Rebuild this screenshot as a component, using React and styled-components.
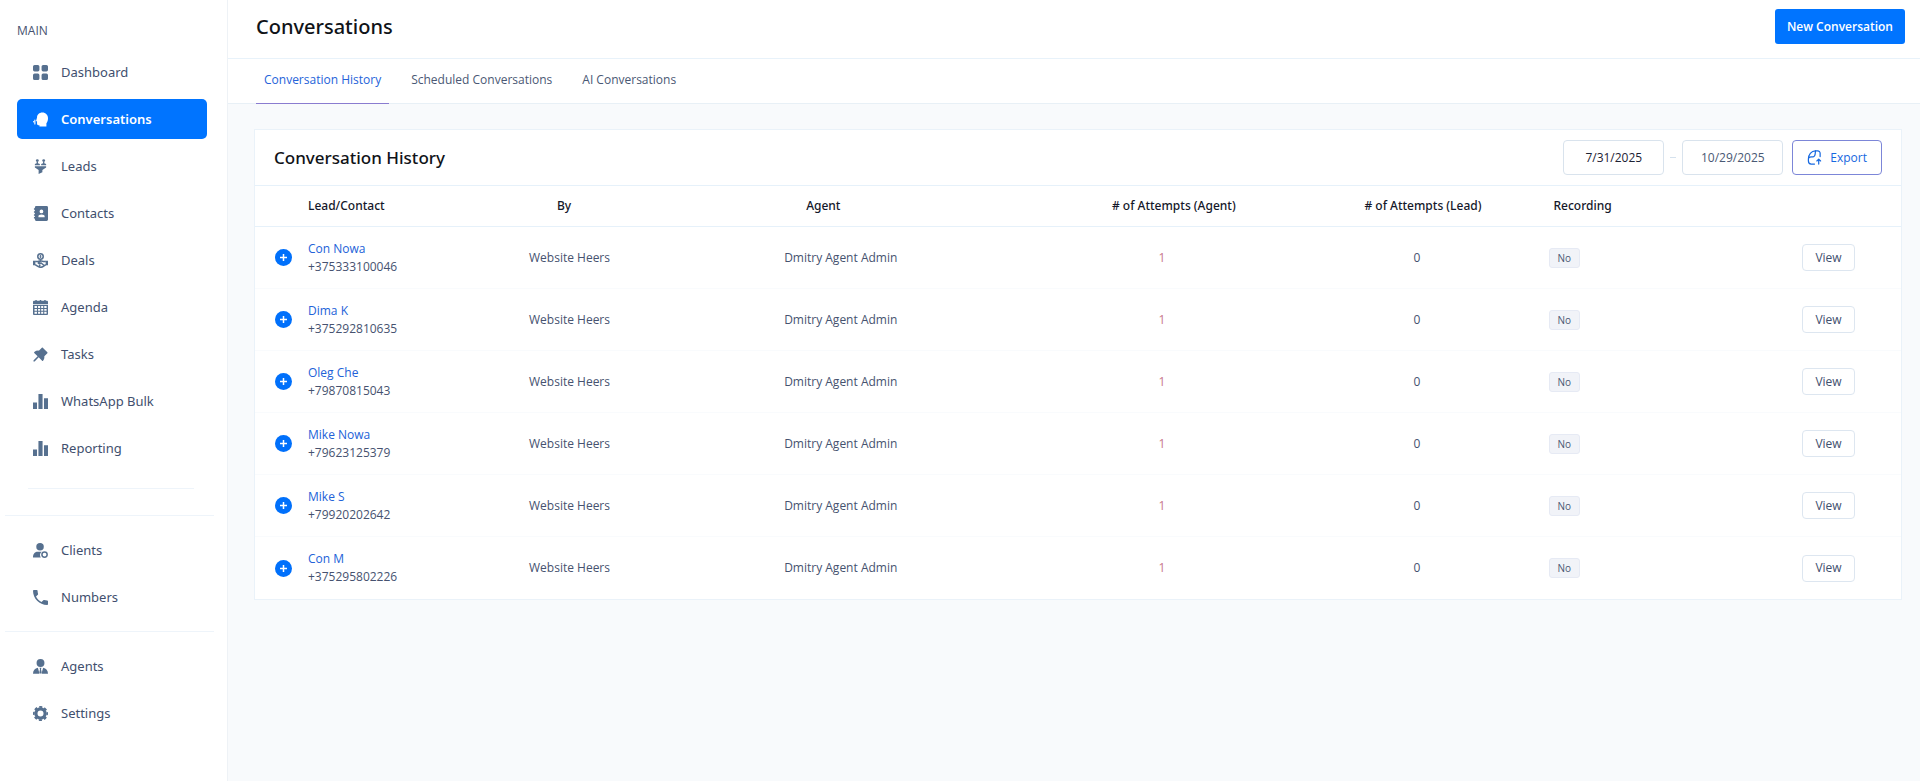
import React from "react";
import styled, { createGlobalStyle } from "styled-components";
import { BsGridFill } from "react-icons/bs";
import { AiFillPushpin } from "react-icons/ai";
import { MdLocalPhone } from "react-icons/md";

const svgProps = {
  viewBox: "0 0 16 16",
  width: "1em",
  height: "1em",
  fill: "currentColor",
  "aria-hidden": true,
};

const HeadIcon = () => (
  <svg {...svgProps}>
    <path d="M10 .5C6.600.5 4.300 2.900 4.300 5.900L3.300 9.200c-.1.400.1.700.5.700h.5v2.700c0 .900.600 1.500 1.400 1.500h1.200v1.400h7.400v-3.400c1.100-1.300 1.700-3.200 1.700-5.400C16 3.100 13.600.5 10 .5z" />
    <circle cx="0.8" cy="10.500" r="0.8" />
    <path d="M2 8.500v4.300" fill="none" stroke="currentColor" strokeWidth="1.200" strokeLinecap="round" />
  </svg>
);

const FunnelIcon = () => (
  <svg {...svgProps}>
    <circle cx="4.600" cy="1.700" r="1.500" />
    <circle cx="11.400" cy="1.700" r="1.500" />
    <path d="M3.900 3h1.400v1.600l2 .8v1.200H2V5.400l1.900-.8zM10.700 3h1.400v1.600l1.900.8v1.200H8.700V5.400l2-.8z" />
    <path d="M2 7.600h12v1.400l-4 2.600V14l-4 2v-4.400L2 9z" />
  </svg>
);

const ContactIcon = () => (
  <svg {...svgProps}>
    <path
      fillRule="evenodd"
      d="M3.500 0h11a1.500 1.500 0 0 1 1.500 1.500v13a1.500 1.500 0 0 1-1.500 1.500h-11A1.500 1.500 0 0 1 2 14.500v-13A1.500 1.500 0 0 1 3.500 0zM9 3.800a2 2 0 1 0 0 4 2 2 0 0 0 0-4zM5.800 12h6.600v-1c0-1.200-1.200-2-3.300-2s-3.300.8-3.300 2z"
    />
    <path d="M1 2.500h2v1.600H1zM1 5.600h2v1.600H1zM1 8.700h2v1.600H1zM1 11.800h2v1.600H1z" />
  </svg>
);

const DealIcon = () => (
  <svg {...svgProps}>
    <circle cx="8" cy="3.700" r="2.900" fill="none" stroke="currentColor" strokeWidth="1.600" />
    <path d="M8 2.100v3.200M7 3.100h2M7 4.400h2" stroke="currentColor" strokeWidth=".9" />
    <path d="M0 8.300h2.500v4.800H0zM13.500 8.300H16v4.800h-2.500z" />
    <path
      d="M2.300 9h2.800L8 8.400l3 .7h2.700M2.300 12.300l2.500 1.700c2 1.500 4.400 1.500 6.200.2l2.700-1.900M8 8.800l-2.300 2c1 1.200 2 .7 2.900-.2l3 2.500M6.500 13l1.300 1"
      fill="none"
      stroke="currentColor"
      strokeWidth="1.600"
    />
  </svg>
);

const CalendarIcon = () => (
  <svg {...svgProps}>
    <path d="M0 1.800A1 1 0 0 1 1 .9h1.500V0H4v.9h3.200V0h1.600v.9H12V0h1.500v.9H15a1 1 0 0 1 1 .9v2.400H0z" />
    <path
      fillRule="evenodd"
      d="M0 5h16v10a1 1 0 0 1-1 1H1a1 1 0 0 1-1-1zM1.600 6.400v2h2.600v-2zM5.400 6.400v2h2.200v-2zM8.700 6.400v2h2.200v-2zM12 6.400v2h2.500v-2zM1.600 9.500v2h2.600v-2zM5.400 9.500v2h2.200v-2zM8.700 9.500v2h2.200v-2zM12 9.500v2h2.500v-2zM1.600 12.600v2h2.600v-2zM5.400 12.600v2h2.200v-2zM8.700 12.600v2h2.200v-2zM12 12.600v2h2.500v-2z"
    />
  </svg>
);

const BarsIcon = () => (
  <svg {...svgProps}>
    <path d="M0 9h4.300v7H0zM5.800 0h4.400v16H5.800zM11.700 4.500H16V16h-4.300z" />
  </svg>
);

const ClientIcon = () => (
  <svg {...svgProps}>
    <circle cx="7.500" cy="4" r="4" />
    <path d="M5 9.300h4.200A5 5 0 0 0 8.300 15.500H0C0 12 1.500 9.300 5 9.300z" />
    <circle cx="12.300" cy="12.300" r="2.800" fill="none" stroke="currentColor" strokeWidth="1.600" />
  </svg>
);

const AgentIcon = () => (
  <svg {...svgProps}>
    <circle cx="8" cy="4.200" r="4.200" />
    <path d="M5.200 9.400L7 15.800H0C0 12.300 2 9.800 5.200 9.400zM10.800 9.400L9 15.800h7c0-3.500-2-6-5.200-6.400z" />
    <path d="M7 9.300h2l-.5 1.700.8 3.400L8 15.800l-1.300-1.400.8-3.400z" />
  </svg>
);

const GearIcon = () => (
  <svg {...svgProps}>
    <circle cx="8" cy="8" r="4.900" fill="none" stroke="currentColor" strokeWidth="3.400" />
    <circle
      cx="8"
      cy="8"
      r="7.100"
      fill="none"
      stroke="currentColor"
      strokeWidth="1.800"
      strokeDasharray="3.300 2.276"
      strokeDashoffset="1.650"
    />
  </svg>
);

const ExportIcon = () => (
  <svg {...svgProps} fill="none" stroke="currentColor" strokeWidth="1.300" strokeLinecap="round" strokeLinejoin="round">
    <path d="M14 7V3.500C14 2 13 1 11.500 1H9C4.500 1 1.500 5 1.500 9.500v2.200C1.500 13.500 2.700 15 4.500 15H8" />
    <path d="M9 1c-.3 3 .2 6-2.500 6.300C4.500 7.500 2.500 7 1.800 8.500" />
    <path d="M12.500 15v-5M10.500 11.700l2-2 2 2" />
  </svg>
);

const mainLinks = [
  { label: "Dashboard", icon: <BsGridFill viewBox="1 1 14 14" /> },
  { label: "Conversations", icon: <HeadIcon />, active: true },
  { label: "Leads", icon: <FunnelIcon /> },
  { label: "Contacts", icon: <ContactIcon /> },
  { label: "Deals", icon: <DealIcon /> },
  { label: "Agenda", icon: <CalendarIcon /> },
  { label: "Tasks", icon: <AiFillPushpin viewBox="112 112 800 800" /> },
  { label: "WhatsApp Bulk", icon: <BarsIcon /> },
  { label: "Reporting", icon: <BarsIcon /> },
];

const clientLinks = [
  { label: "Clients", icon: <ClientIcon /> },
  { label: "Numbers", icon: <MdLocalPhone viewBox="3 3 18 18" /> },
];

const adminLinks = [
  { label: "Agents", icon: <AgentIcon /> },
  { label: "Settings", icon: <GearIcon /> },
];

const conversations = [
  { name: "Con Nowa", phone: "+375333100046" },
  { name: "Dima K", phone: "+375292810635" },
  { name: "Oleg Che", phone: "+79870815043" },
  { name: "Mike Nowa", phone: "+79623125379" },
  { name: "Mike S", phone: "+79920202642" },
  { name: "Con M", phone: "+375295802226" },
];

function NavLinks({ links }) {
  return (
    <NavList>
      {links.map((link) => (
        <li key={link.label}>
          <SideBarLink href="#" $active={link.active}>
            <span>{link.icon}</span>
            {link.label}
          </SideBarLink>
        </li>
      ))}
    </NavList>
  );
}

export default function App() {
  return (
    <Page>
      <GlobalStyle />
      <SideBar>
        <SectionTitle>MAIN</SectionTitle>
        <NavLinks links={mainLinks} />
        <InnerDivider />
        <Divider />
        <NavLinks links={clientLinks} />
        <Divider />
        <NavLinks links={adminLinks} />
      </SideBar>
      <Main>
        <Header>
          <PageTitle>Conversations</PageTitle>
          <PrimaryButton type="button">New Conversation</PrimaryButton>
        </Header>
        <Tabs>
          <Tab href="#" $active>
            Conversation History
          </Tab>
          <Tab href="#">Scheduled Conversations</Tab>
          <Tab href="#">AI Conversations</Tab>
        </Tabs>
        <Card>
          <CardHeader>
            <CardTitle>Conversation History</CardTitle>
            <Filters>
              <DateInput aria-label="Start date" defaultValue="7/31/2025" $dark />
              <Dash />
              <DateInput aria-label="End date" defaultValue="10/29/2025" />
              <ExportButton type="button">
                <ExportIcon />
                Export
              </ExportButton>
            </Filters>
          </CardHeader>
          <Table>
            <colgroup>
              <Col $width="44px" />
              <Col $width="225px" />
              <Col $width="15.5%" />
              <Col $width="15.5%" />
              <Col $width="15.5%" />
              <Col $width="15.5%" />
              <Col />
              <Col $width="146px" />
            </colgroup>
            <thead>
              <tr>
                <Th />
                <Th $indent="9px">Lead/Contact</Th>
                <Th $indent="33px">By</Th>
                <Th $indent="27px">Agent</Th>
                <Th $align="center" $indent="24px">
                  # of Attempts (Agent)
                </Th>
                <Th $align="center" $indent="12px">
                  # of Attempts (Lead)
                </Th>
                <Th $indent="9px">Recording</Th>
                <Th />
              </tr>
            </thead>
            <tbody>
              {conversations.map((item) => (
                <Row key={item.phone}>
                  <Td $indent="20px">
                    <ExpandButton type="button" aria-label={`Expand ${item.name}`}>
                      <svg viewBox="0 0 17 17" width="17" height="17" aria-hidden="true">
                        <path d="M8.500 5v7M5 8.500h7" stroke="#fff" strokeWidth="1.500" />
                      </svg>
                    </ExpandButton>
                  </Td>
                  <Td $indent="9px">
                    <LeadLink href="#">{item.name}</LeadLink>
                    <Phone>{item.phone}</Phone>
                  </Td>
                  <Td $indent="5px">Website Heers</Td>
                  <Td $indent="5px">Dmitry Agent Admin</Td>
                  <Td $align="center" $color="#c9788c">
                    1
                  </Td>
                  <Td $align="center">0</Td>
                  <Td $indent="4px">
                    <Badge>No</Badge>
                  </Td>
                  <Td>
                    <Actions>
                      <ViewButton type="button">View</ViewButton>
                    </Actions>
                  </Td>
                </Row>
              ))}
            </tbody>
          </Table>
        </Card>
      </Main>
    </Page>
  );
}

const GlobalStyle = createGlobalStyle`
  * {
    box-sizing: border-box;
  }
  body {
    margin: 0;
    background-color: #f8fafc;
    color: #46526f;
    font-family: "Open Sans", "Noto Sans", sans-serif;
    font-size: 12px;
    line-height: 18px;
  }
  button,
  input {
    font: inherit;
  }
`;

const Page = styled.div`
  display: flex;
  min-height: 100vh;
`;

const SideBar = styled.nav`
  display: flex;
  flex-direction: column;
  flex-shrink: 0;
  width: 228px;
  padding: 22px 0;
  background-color: #fff;
  border-right: 1px solid #eef2f6;
`;

const SectionTitle = styled.p`
  margin: 0 0 12px;
  padding: 0 17px;
`;

const NavList = styled.ul`
  display: flex;
  flex-direction: column;
  gap: 7px;
  margin: 0;
  padding: 0 20px 0 17px;
  list-style: none;
`;

const SideBarLink = styled.a`
  display: flex;
  align-items: center;
  gap: 13px;
  height: 40px;
  padding: 0 16px;
  border-radius: 5px;
  background-color: ${(props) => (props.$active ? "#0074ff" : "transparent")};
  color: ${(props) => (props.$active ? "#fff" : "#414f6e")};
  font-family: "Noto Sans", sans-serif;
  font-size: 13px;
  font-weight: ${(props) => (props.$active ? 600 : 400)};
  text-decoration: none;
  span {
    display: flex;
    font-size: 15px;
    color: ${(props) => (props.$active ? "#fff" : "#56708f")};
  }
`;

const Divider = styled.hr`
  width: 209px;
  height: 1px;
  margin: 14px 0 14px 5px;
  border: 0;
  background-color: #eef4fa;
`;

const InnerDivider = styled(Divider)`
  width: 166px;
  margin: 20px 0 12px 28px;
`;

const Main = styled.main`
  flex: 1;
  min-width: 0;
`;

const Header = styled.header`
  display: flex;
  align-items: flex-start;
  justify-content: space-between;
  height: 59px;
  padding: 9px 15px 0 28px;
  background-color: #fff;
  border-bottom: 1px solid #e8f2fa;
`;

const PageTitle = styled.h1`
  margin: 0;
  color: #101318;
  font-family: "Noto Sans", sans-serif;
  font-size: 20px;
  font-weight: 500;
  line-height: 35px;
`;

const PrimaryButton = styled.button`
  height: 35px;
  padding: 0 12px;
  border: 0;
  border-radius: 3px;
  background-color: #0074ff;
  color: #fff;
  font-weight: 600;
`;

const Tabs = styled.nav`
  display: flex;
  gap: 14px;
  height: 45px;
  padding: 0 28px;
  background-color: #fff;
  border-bottom: 1px solid #e8f0f6;
`;

const Tab = styled.a`
  height: 45px;
  padding: 12px 8px;
  border-bottom: 1px solid ${(props) => (props.$active ? "#8a7cd0" : "transparent")};
  color: ${(props) => (props.$active ? "#2563d9" : "#4a5874")};
  text-decoration: none;
`;

const Card = styled.section`
  margin: 25px 18px 24px 26px;
  background-color: #fff;
  border: 1px solid #eaf2f9;
`;

const CardHeader = styled.div`
  display: flex;
  align-items: center;
  justify-content: space-between;
  height: 56px;
  padding: 0 19px;
  border-bottom: 1px solid #e6f1fa;
`;

const CardTitle = styled.h2`
  margin: 0;
  color: #101318;
  font-family: "Noto Sans", sans-serif;
  font-size: 17px;
  font-weight: 500;
  line-height: 24px;
`;

const Filters = styled.div`
  display: flex;
  align-items: center;
  gap: 9px;
`;

const DateInput = styled.input`
  width: 101px;
  height: 35px;
  padding: 0;
  border: 1px solid #d9e3ed;
  border-radius: 4px;
  background-color: #fff;
  color: ${(props) => (props.$dark ? "#1d2233" : "#4a5874")};
  text-align: center;
`;

const Dash = styled.span`
  width: 6px;
  height: 1px;
  margin: 0 -3px;
  background-color: #d5e2ee;
`;

const ExportButton = styled.button`
  display: flex;
  align-items: center;
  gap: 8px;
  height: 35px;
  padding: 0 14px;
  border: 1px solid #7c86d8;
  border-radius: 4px;
  background-color: #fff;
  color: #1668e0;
  svg {
    font-size: 15px;
  }
`;

const Table = styled.table`
  width: 100%;
  table-layout: fixed;
  border-collapse: separate;
  border-spacing: 0;
`;

const Col = styled.col`
  width: ${(props) => props.$width || "auto"};
`;

const Th = styled.th`
  height: 41px;
  padding: 0 0 0 ${(props) => props.$indent || 0};
  border-bottom: 1px solid #e6f1fa;
  color: #14182a;
  font-family: "Noto Sans", sans-serif;
  font-weight: 500;
  text-align: ${(props) => props.$align || "left"};
`;

const Td = styled.td`
  height: 62px;
  padding: 0 0 0 ${(props) => props.$indent || 0};
  border-bottom: 1px solid #f9fbfd;
  color: ${(props) => props.$color || "#46526f"};
  text-align: ${(props) => props.$align || "left"};
`;

const Row = styled.tr`
  &:last-child ${Td} {
    border-bottom: 0;
  }
`;

const ExpandButton = styled.button`
  display: block;
  width: 17px;
  height: 17px;
  padding: 0;
  border: 0;
  border-radius: 50%;
  background-color: #0070fb;
  svg {
    display: block;
  }
`;

const LeadLink = styled.a`
  display: block;
  color: #2262d8;
  text-decoration: none;
`;

const Phone = styled.div``;

const Badge = styled.span`
  display: inline-block;
  padding: 0 8px;
  border: 1px solid #e6eaf4;
  border-radius: 3px;
  background-color: #f1f3f8;
  color: #4a5874;
  font-size: 10px;
  font-weight: 500;
`;

const Actions = styled.div`
  display: flex;
  justify-content: flex-end;
  padding-right: 46px;
`;

const ViewButton = styled.button`
  width: 53px;
  height: 27px;
  padding: 0;
  border: 1px solid #dde6f0;
  border-radius: 4px;
  background-color: #fff;
  color: #414f6e;
`;
